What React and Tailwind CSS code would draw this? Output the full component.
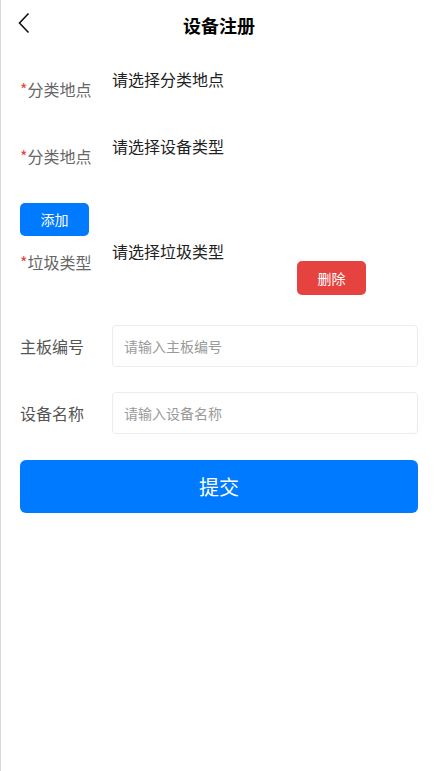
import React from "react";

const font = { fontFamily: '"Noto Sans CJK SC", "Noto Sans", sans-serif' };

function PickerRow({ label, value, className = "" }) {
  return (
    <div className={"flex items-start " + className}>
      <div className="w-[92px] pt-[10px] text-[16px] leading-[20px] text-[#666]">
        <span className="text-[#e64340]">*</span>
        {label}
      </div>
      <div className="text-[16px] leading-[20px] text-[#222]">{value}</div>
    </div>
  );
}

function InputRow({ label, placeholder, className = "" }) {
  return (
    <div className={"flex items-center " + className}>
      <div className="w-[92px] text-[16px] leading-[20px] text-[#555]">{label}</div>
      <div className="flex h-[42px] flex-1 items-center rounded-[4px] border border-[#ececec] pl-[11px] text-[14px] text-[#9a9a9a]">
        {placeholder}
      </div>
    </div>
  );
}

export default function App() {
  return (
    <div
      style={font}
      className="min-h-[771px] w-[435px] border-l border-[#d8d8d8] bg-white pl-[19px] pr-[17px]"
    >
      <div className="relative flex h-[51px] items-center justify-center">
        <svg
          className="absolute left-[-2px] top-[12px]"
          width="14"
          height="22"
          viewBox="0 0 14 22"
        >
          <path d="M10.5 1.5 L1.5 11 L10.5 20.5" fill="none" stroke="#111" strokeWidth="1.6" />
        </svg>
        <div className="text-[18px] font-bold text-black">设备注册</div>
      </div>

      <PickerRow className="mt-[18px]" label="分类地点" value="请选择分类地点" />
      <PickerRow className="mt-[37px]" label="分类地点" value="请选择设备类型" />

      <button className="mt-[37px] flex h-[33px] w-[69px] items-center justify-center rounded-[5px] bg-[#007aff] text-[14px] text-white">
        添加
      </button>

      <div className="mt-[5px] flex items-start">
        <div className="w-[92px] pt-[11px] text-[16px] leading-[20px] text-[#666]">
          <span className="text-[#e64340]">*</span>
          垃圾类型
        </div>
        <div className="flex w-[254px] flex-col">
          <div className="text-[16px] leading-[20px] text-[#222]">请选择垃圾类型</div>
          <button className="flex h-[34px] w-[69px] items-center justify-center self-end rounded-[5px] bg-[#e64340] text-[14px] text-white">
            删除
          </button>
        </div>
      </div>

      <InputRow className="mt-[30px]" label="主板编号" placeholder="请输入主板编号" />
      <InputRow className="mt-[25px]" label="设备名称" placeholder="请输入设备名称" />

      <button className="mt-[26px] flex h-[53px] w-full items-center justify-center rounded-[6px] bg-[#007aff] text-[20px] text-white">
        提交
      </button>
    </div>
  );
}
